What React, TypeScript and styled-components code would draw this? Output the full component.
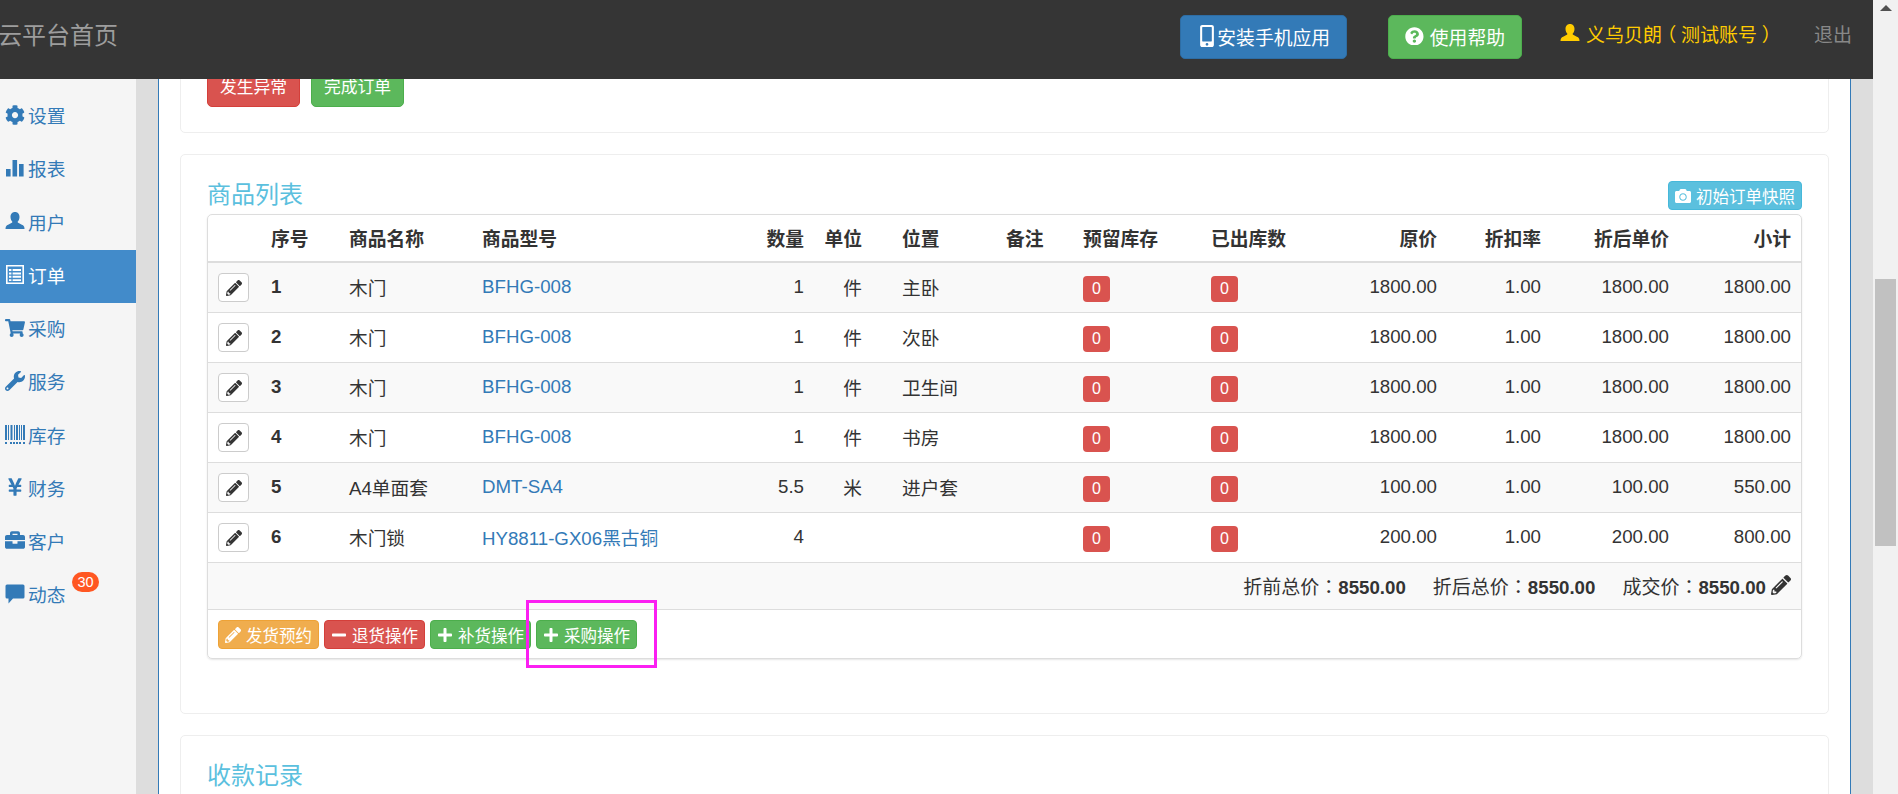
import * as React from "react"
import styled, { createGlobalStyle } from "styled-components"
import {
  FaCog, FaShoppingCart, FaWrench, FaYenSign, FaBriefcase, FaPencilAlt,
  FaCamera, FaPlus, FaMinus, FaQuestionCircle, FaMobileAlt,
} from "react-icons/fa"

const GlobalStyle = createGlobalStyle`
  html, body {
    margin: 0;
    overflow: hidden;
    background: #fff;
  }
  * { box-sizing: border-box; }
  body {
    font-family: "Liberation Sans", "Noto Sans CJK SC", sans-serif;
    font-size: 18.7px;
    color: #333;
  }
`

const Page = styled.div`
  display: flex;
  width: 1898px;
  height: 794px;
  overflow: hidden;
`
const Viewport = styled.div`
  flex: 1;
  min-width: 0;
  display: flex;
  flex-direction: column;
`
const TopBar = styled.header`
  flex: 0 0 79px;
  display: flex;
  align-items: center;
  padding: 0 21px 13px 0;
  background: #353535;
`
const Brand = styled.div`
  margin-left: -2px;
  margin-right: auto;
  font-size: 24px;
  color: #9d9d9d;
`
const HeadButton = styled.a<{ $tone: "blue" | "green"; $gap: number }>`
  display: flex;
  align-items: center;
  height: 44px;
  margin-top: 8px;
  margin-left: ${p => (p.$tone === "green" ? 41 : 0)}px;
  padding: 0 16px 2px ${p => (p.$tone === "green" ? 16 : 19)}px;
  gap: ${p => p.$gap}px;
  border-radius: 5px;
  border: 1px solid ${p => (p.$tone === "blue" ? "#2e6da4" : "#4cae4c")};
  color: #fff;
  font-size: 18.8px;
  background: ${p => (p.$tone === "blue" ? "#337ab7" : "#5cb85c")};
`
const PhoneIcon = styled(FaMobileAlt)`
  width: 14px;
  height: 22px;
`
const UserName = styled.div`
  display: flex;
  align-items: center;
  gap: 6px;
  margin-left: 38px;
  font-size: 19px;
  color: #fc0;
`
const Punct = styled.span`
  display: inline-block;
  width: 1em;
  text-align: center;
  font-family: "Noto Sans CJK TC", sans-serif;
  font-feature-settings: "halt";
`
const Logout = styled.a`
  margin-left: 38px;
  font-size: 19px;
  color: #888;
`

const Body = styled.div`
  flex: 1;
  min-height: 0;
  display: flex;
  overflow: hidden;
`
const Sidebar = styled.nav`
  flex: 0 0 136px;
  padding-top: 11px;
  background: #f5f5f5;
`
const NavItem = styled.a<{ $active?: boolean }>`
  position: relative;
  display: flex;
  align-items: center;
  gap: 3px;
  height: 53.24px;
  padding: 0 0 4px 5px;
  color: ${p => (p.$active ? "#fff" : "#337ab7")};
  background: ${p => (p.$active ? "#428bca" : "transparent")};
`
const NavIcon = styled.span`
  display: flex;
  justify-content: center;
  width: 20px;
  font-size: 20px;
`
const NavBadge = styled.span`
  position: absolute;
  left: 72px;
  top: 3px;
  width: 27px;
  height: 20px;
  border-radius: 10px;
  background: #ff5722;
  color: #fff;
  font-size: 14.5px;
  line-height: 20px;
  text-align: center;
`
const Gutter = styled.div<{ $width: number }>`
  flex: 0 0 ${p => p.$width}px;
  background: #ddd;
`
const Main = styled.main`
  flex: 1;
  min-width: 0;
  padding: 0 21px;
  background: #fff;
  border-left: 1px solid #337ab7;
  border-right: 1px solid #337ab7;
`
const Card = styled.section`
  margin-bottom: 21px;
  padding: 26px 26px 54px;
  background: #fff;
  border: 1px solid #eee;
  border-radius: 5px;
`
const TopCard = styled(Card)`
  display: flex;
  gap: 11px;
  margin-top: -40px;
  padding-bottom: 25px;
`
const Button = styled.a<{ $tone: "red" | "green" }>`
  display: flex;
  align-items: center;
  justify-content: center;
  width: 93px;
  height: 41px;
  padding-bottom: 2px;
  border-radius: 5px;
  border: 1px solid ${p => (p.$tone === "red" ? "#d43f3a" : "#4cae4c")};
  background: ${p => (p.$tone === "red" ? "#d9534f" : "#5cb85c")};
  color: #fff;
  font-size: 16.8px;
`
const CardHead = styled.div`
  display: flex;
  justify-content: space-between;
  align-items: flex-start;
  margin-bottom: 4px;
`
const Title = styled.h4`
  margin: 2px 0 0;
  font-size: 24px;
  font-weight: 400;
  line-height: 24px;
  color: #5bc0de;
`
const smallTones = {
  orange: ["#f0ad4e", "#eea236"],
  red: ["#d9534f", "#d43f3a"],
  green: ["#5cb85c", "#4cae4c"],
  cyan: ["#5bc0de", "#46b8da"],
}
const SmallButton = styled.a<{ $tone: keyof typeof smallTones }>`
  display: flex;
  align-items: center;
  gap: 5px;
  height: 29px;
  padding: 0 6px;
  border-radius: 4px;
  border: 1px solid ${p => smallTones[p.$tone][1]};
  color: #fff;
  font-size: 16.5px;
  white-space: nowrap;
  background: ${p => smallTones[p.$tone][0]};
  svg {
    flex: none;
    font-size: 16px;
  }
`
const Panel = styled.div`
  border: 1px solid #ddd;
  border-radius: 5px;
  box-shadow: 0 1px 2px rgba(0, 0, 0, 0.1);
`
const Table = styled.table`
  width: 1593px;
  table-layout: fixed;
  border-collapse: separate;
  border-spacing: 0;
`
const Th = styled.th<{ $right?: boolean; $inset?: number }>`
  height: 48px;
  padding: 0 ${p => p.$inset ?? 10}px 2px 10px;
  text-align: ${p => (p.$right ? "right" : "left")};
  font-weight: 700;
  font-size: 18.8px;
  white-space: nowrap;
  border-bottom: 2px solid #ddd;
`
const Row = styled.tr`
  &:nth-child(odd) td { background: #f9f9f9; }
`
const Td = styled.td<{ $right?: boolean; $bold?: boolean; $inset?: number }>`
  height: 50px;
  padding: 0 ${p => p.$inset ?? 10}px 2px 10px;
  text-align: ${p => (p.$right ? "right" : "left")};
  font-weight: ${p => (p.$bold ? 700 : 400)};
  white-space: nowrap;
  border-bottom: 1px solid #ddd;
  vertical-align: middle;
`
const EditButton = styled.span`
  display: flex;
  align-items: center;
  justify-content: center;
  width: 31px;
  height: 29px;
  margin-top: 2px;
  border: 1px solid #ccc;
  border-radius: 4px;
  background: #fff;
  color: #333;
  font-size: 16px;
`
const ModelLink = styled.a`
  color: #337ab7;
`
const Count = styled.span`
  display: flex;
  align-items: center;
  justify-content: center;
  width: 27px;
  height: 26px;
  margin-top: 5px;
  border-radius: 4px;
  background: #d9534f;
  color: #fff;
  font-size: 16px;
`
const Totals = styled.div`
  display: flex;
  justify-content: flex-end;
  align-items: center;
  gap: 27px;
  height: 47px;
  padding: 0 10px 2px 0;
  background: #f9f9f9;
  border-bottom: 1px solid #ddd;
`
const Total = styled.span`
  white-space: nowrap;
  font-size: 19px;
  b { font-weight: 700; font-size: 18.7px; }
  svg {
    margin-left: 5px;
    font-size: 20px;
    vertical-align: -1px;
  }
`
const Actions = styled.div`
  position: relative;
  display: flex;
  gap: 5px;
  height: 48px;
  padding: 10px 10px 9px;
`
const Highlight = styled.div`
  position: absolute;
  left: 318px;
  top: -10px;
  width: 131px;
  height: 68px;
  border: 3px solid #fb1ff2;
`
const Scrollbar = styled.div`
  flex: 0 0 25px;
  display: flex;
  flex-direction: column;
  align-items: center;
  background: #f1f1f1;
`
const ScrollArrow = styled.div`
  width: 0;
  height: 0;
  margin-top: 5px;
  border-left: 6px solid transparent;
  border-right: 6px solid transparent;
  border-bottom: 6px solid #505050;
`
const ScrollThumb = styled.div`
  width: 21px;
  height: 267px;
  margin-top: 268px;
  background: #c1c1c1;
`

const StatsIcon = () => (
  <svg width="18" height="18" viewBox="0 0 18 18" fill="currentColor">
    <rect x="0" y="10" width="4.6" height="7.5" />
    <rect x="6.5" y="1" width="4.6" height="16.5" />
    <rect x="13" y="5" width="4.6" height="12.5" />
  </svg>
)
const UserIcon = ({ size = 20 }: { size?: number }) => (
  <svg width={size} height={size} viewBox="0 0 20 20" fill="currentColor">
    <path d="M10 1c3 0 4.5 2.3 4.5 5 0 2.2-1 4-2 5 .2 1 3.5 2 5.5 3.3 1 .7 1.5 2 1.5 3.7H.5c0-1.7.5-3 1.5-3.7C4 13 7.3 12 7.5 11c-1-1-2-2.8-2-5 0-2.7 1.5-5 4.5-5z" />
  </svg>
)
const ListIcon = () => (
  <svg width="18" height="19" viewBox="0 0 18 19" fill="currentColor">
    <path fillRule="evenodd" d="M0 0h18v19H0zM1.6 1.6v15.8h14.8V1.6z" />
    <path d="M3 4h2.4v2H3zM6.6 4H15v2H6.6zM3 7.4h2.4v2H3zM6.6 7.4H15v2H6.6zM3 10.8h2.4v2H3zM6.6 10.8H15v2H6.6zM3 14.2h2.4V16H3zM6.6 14.2H15V16H6.6z" />
  </svg>
)
const BarcodeIcon = () => (
  <svg width="20" height="19" viewBox="0 0 20 19" fill="currentColor">
    <path d="M0 0h2v15H0zM3 0h1v15H3zM5.5 0h2v15h-2zM9 0h1v15H9zM11 0h2v15h-2zM14 0h1v15h-1zM16 0h1v15h-1zM18 0h2v15h-2z" />
    <path d="M0 17h2v2H0zM5 17h2v2H5zM8 17h2v2H8zM11 17h2v2h-2zM14 17h2v2h-2zM18 17h2v2h-2z" />
  </svg>
)
const CommentIcon = () => (
  <svg width="20" height="20" viewBox="0 0 20 20" fill="currentColor">
    <path d="M2 .5h16A1.5 1.5 0 0 1 19.5 2v11a1.5 1.5 0 0 1-1.5 1.5H8l-4.5 5v-5H2A1.5 1.5 0 0 1 .5 13V2A1.5 1.5 0 0 1 2 .5z" />
  </svg>
)

const navItems = [
  { label: "设置", icon: <FaCog /> },
  { label: "报表", icon: <StatsIcon /> },
  { label: "用户", icon: <UserIcon /> },
  { label: "订单", icon: <ListIcon />, active: true },
  { label: "采购", icon: <FaShoppingCart /> },
  { label: "服务", icon: <FaWrench /> },
  { label: "库存", icon: <BarcodeIcon /> },
  { label: "财务", icon: <FaYenSign /> },
  { label: "客户", icon: <FaBriefcase /> },
  { label: "动态", icon: <CommentIcon />, badge: 30 },
]

const colWidths = [53, 78, 133, 228, 114, 78, 104, 77, 128, 129, 117, 104, 128, 122]

const rows = [
  { name: "木门", model: "BFHG-008", qty: "1", unit: "件", place: "主卧", price: "1800.00", net: "1800.00", sum: "1800.00" },
  { name: "木门", model: "BFHG-008", qty: "1", unit: "件", place: "次卧", price: "1800.00", net: "1800.00", sum: "1800.00" },
  { name: "木门", model: "BFHG-008", qty: "1", unit: "件", place: "卫生间", price: "1800.00", net: "1800.00", sum: "1800.00" },
  { name: "木门", model: "BFHG-008", qty: "1", unit: "件", place: "书房", price: "1800.00", net: "1800.00", sum: "1800.00" },
  { name: "A4单面套", model: "DMT-SA4", qty: "5.5", unit: "米", place: "进户套", price: "100.00", net: "100.00", sum: "550.00" },
  { name: "木门锁", model: "HY8811-GX06黑古铜", qty: "4", unit: "", place: "", price: "200.00", net: "200.00", sum: "800.00" },
]

export default function App() {
  return (
    <Page>
      <GlobalStyle />
      <Viewport>
        <TopBar>
          <Brand>云平台首页</Brand>
          <HeadButton $tone="blue" $gap={3}><PhoneIcon />安装手机应用</HeadButton>
          <HeadButton $tone="green" $gap={6}><FaQuestionCircle />使用帮助</HeadButton>
          <UserName>
            <UserIcon size={20} />
            <span>义乌贝朗<Punct>（</Punct>测试账号<Punct>）</Punct></span>
          </UserName>
          <Logout>退出</Logout>
        </TopBar>
        <Body>
          <Sidebar>
            {navItems.map(item => (
              <NavItem key={item.label} $active={item.active}>
                <NavIcon>{item.icon}</NavIcon>
                {item.label}
                {item.badge && <NavBadge>{item.badge}</NavBadge>}
              </NavItem>
            ))}
          </Sidebar>
          <Gutter $width={22} />
          <Main>
            <TopCard>
              <Button $tone="red">发生异常</Button>
              <Button $tone="green">完成订单</Button>
            </TopCard>
            <Card>
              <CardHead>
                <Title>商品列表</Title>
                <SmallButton $tone="cyan"><FaCamera />初始订单快照</SmallButton>
              </CardHead>
              <Panel>
                <Table>
                  <colgroup>
                    {colWidths.map((w, i) => <col key={i} style={{ width: w }} />)}
                  </colgroup>
                  <thead>
                    <tr>
                      <Th />
                      <Th>序号</Th>
                      <Th>商品名称</Th>
                      <Th>商品型号</Th>
                      <Th $right>数量</Th>
                      <Th $right $inset={30}>单位</Th>
                      <Th>位置</Th>
                      <Th>备注</Th>
                      <Th>预留库存</Th>
                      <Th>已出库数</Th>
                      <Th $right>原价</Th>
                      <Th $right>折扣率</Th>
                      <Th $right>折后单价</Th>
                      <Th $right>小计</Th>
                    </tr>
                  </thead>
                  <tbody>
                    {rows.map((row, i) => (
                      <Row key={i}>
                        <Td><EditButton><FaPencilAlt /></EditButton></Td>
                        <Td $bold>{i + 1}</Td>
                        <Td>{row.name}</Td>
                        <Td><ModelLink>{row.model}</ModelLink></Td>
                        <Td $right>{row.qty}</Td>
                        <Td $right $inset={30}>{row.unit}</Td>
                        <Td>{row.place}</Td>
                        <Td />
                        <Td><Count>0</Count></Td>
                        <Td><Count>0</Count></Td>
                        <Td $right>{row.price}</Td>
                        <Td $right>1.00</Td>
                        <Td $right>{row.net}</Td>
                        <Td $right>{row.sum}</Td>
                      </Row>
                    ))}
                  </tbody>
                </Table>
                <Totals>
                  <Total>折前总价<Punct>：</Punct><b>8550.00</b></Total>
                  <Total>折后总价<Punct>：</Punct><b>8550.00</b></Total>
                  <Total>成交价<Punct>：</Punct><b>8550.00</b><FaPencilAlt /></Total>
                </Totals>
                <Actions>
                  <SmallButton $tone="orange"><FaPencilAlt />发货预约</SmallButton>
                  <SmallButton $tone="red"><FaMinus />退货操作</SmallButton>
                  <SmallButton $tone="green"><FaPlus />补货操作</SmallButton>
                  <SmallButton $tone="green"><FaPlus />采购操作</SmallButton>
                  <Highlight />
                </Actions>
              </Panel>
            </Card>
            <Card>
              <Title>收款记录</Title>
            </Card>
          </Main>
          <Gutter $width={22} />
        </Body>
      </Viewport>
      <Scrollbar>
        <ScrollArrow />
        <ScrollThumb />
      </Scrollbar>
    </Page>
  )
}
